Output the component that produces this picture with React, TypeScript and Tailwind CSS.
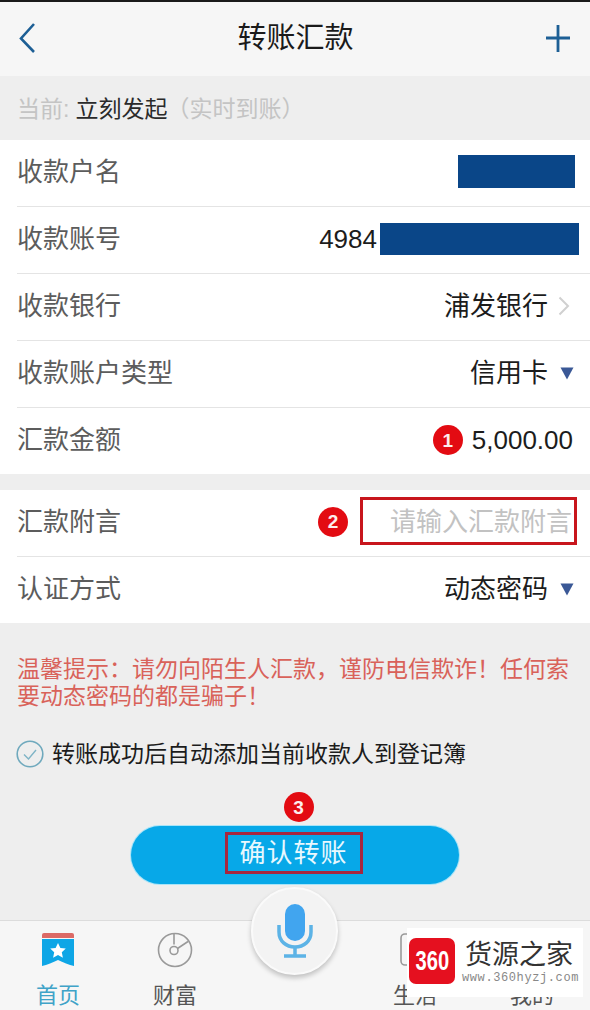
import type { ReactNode } from "react";

const CJK = "font-['Liberation_Sans','Noto_Sans_CJK_SC',sans-serif]";

function Badge({ n, className = "" }: { n: number; className?: string }) {
  return (
    <span
      className={`flex h-[30px] w-[30px] shrink-0 items-center justify-center rounded-full bg-[#e30b12] text-[19px] font-bold leading-none text-[#fdeeee] ${className}`}
    >
      {n}
    </span>
  );
}

function Caret() {
  return (
    <svg width="14" height="13" viewBox="0 0 14 13" className="ml-[12px] shrink-0">
      <path d="M0.5 0.5h13L7 12.5z" fill="#3a5896" />
    </svg>
  );
}

function Row({
  label,
  children,
  divider = true,
}: {
  label: string;
  children?: ReactNode;
  divider?: boolean;
}) {
  return (
    <div className="pl-[17px]">
      <div
        className={`flex items-center justify-between pb-[2px] pr-4 ${
          divider ? "h-[67px] border-b border-[#e4e4e4]" : "h-[66px]"
        }`}
      >
        <span className="text-[26px] leading-none text-[#5c5c5c]">{label}</span>
        <div className="flex items-center text-[26px] leading-none text-[#1c1c1c]">
          {children}
        </div>
      </div>
    </div>
  );
}

function App() {
  return (
    <div className={`relative h-[1010px] w-[590px] overflow-hidden bg-[#eeeeee] ${CJK}`}>
      <div className="h-[2px] bg-[#1a1a1a]" />

      <div className="flex h-[74px] items-center justify-between bg-[#f6f6f6] pb-[2px] pl-[18px] pr-[19px]">
        <svg width="26" height="32" viewBox="0 0 26 32" fill="none">
          <path d="M16 2L3 16.5 16 30" stroke="#1d5f95" strokeWidth="2.6" />
        </svg>
        <span className="ml-[2px] text-[29px] leading-none text-[#1a1a1a]">转账汇款</span>
        <svg width="26" height="30" viewBox="0 0 26 30" fill="none">
          <path d="M13 2v27M1 15h24" stroke="#1d5f95" strokeWidth="2.8" />
        </svg>
      </div>

      <div className="flex h-[64px] items-center bg-[#eeeeee] pl-[17px] pt-[2px] text-[23px] leading-none text-[#c4c4c4]">
        <span>当前:</span>
        <span className="ml-[6px] text-[#2a2a2a]">立刻发起</span>
        <span className="-ml-[1px] -mt-[3px] font-['Noto_Sans_CJK_SC',sans-serif]">{"\uFF08实时到账\uFF09"}</span>
      </div>

      <div className="bg-white">
        <Row label="收款户名">
          <div className="-mr-[1px] -mt-[2px] h-[33px] w-[117px] bg-[#0a4688]" />
        </Row>
        <Row label="收款账号">
          <span className="mr-[3px]">4984</span>
          <div className="-mr-[5px] h-[32px] w-[199px] bg-[#0a4688]" />
        </Row>
        <Row label="收款银行">
          <span>浦发银行</span>
          <svg width="12" height="20" viewBox="0 0 12 20" fill="none" className="ml-[10px] mr-[4px]">
            <path d="M1.5 1.5L10 10l-8.5 8.5" stroke="#d0d0d0" strokeWidth="2" />
          </svg>
        </Row>
        <Row label="收款账户类型">
          <span>信用卡</span>
          <Caret />
        </Row>
        <Row label="汇款金额" divider={false}>
          <Badge n={1} className="mr-[9px]" />
          <span className="mr-px text-[26px]">5,000.00</span>
        </Row>
      </div>

      <div className="mt-[16px] bg-white">
        <Row label="汇款附言">
          <Badge n={2} className="mr-[12px] mt-[-1px]" />
          <div className="-mr-[3px] -mt-[3px] flex h-[48px] w-[217px] items-center justify-end border-[3px] border-[#c8161d] pr-[2px] pt-[2px] text-[#c2c2c2]">
            请输入汇款附言
          </div>
        </Row>
        <Row label="认证方式" divider={false}>
          <span>动态密码</span>
          <Caret />
        </Row>
      </div>

      <p className="mt-[31px] w-[575px] pl-[17px] font-['Noto_Sans_CJK_SC',sans-serif] text-[23px] leading-[27px] text-[#d9625a]">
        {"温馨提示\uFF1A请勿向陌生人汇款\uFF0C谨防电信欺诈\uFF01任何索要动态密码的都是骗子\uFF01"}
      </p>

      <div className="mt-[32px] flex items-center pl-[16px]">
        <svg width="28" height="28" viewBox="0 0 28 28" fill="none">
          <circle cx="14" cy="14" r="12.8" stroke="#6fa9bd" strokeWidth="1.6" />
          <path d="M8 14.5l4.5 4.5L20 10" stroke="#7fb4c6" strokeWidth="1.4" />
        </svg>
        <span className="ml-[8px] text-[23px] leading-none text-[#1c1c1c]">
          转账成功后自动添加当前收款人到登记簿
        </span>
      </div>

      <div className="mt-[24px] flex justify-center pl-[7px]">
        <Badge n={3} />
      </div>

      <div className="mx-auto mt-[4px] flex h-[58px] w-[328px] items-center justify-center rounded-full bg-[#07a8e8] shadow-[0_0_0_1px_#a8e4f8]">
        <span className="mb-[5px] mr-[3px] flex h-[42px] w-[138px] items-center justify-center border-[3px] border-[#a6263f] pt-[2px] text-[26px] tracking-[1px] text-[#e8f8fe]">
          确认转账
        </span>
      </div>

      <div className="absolute inset-x-0 bottom-0 flex h-[90px] border-t border-[#dcdcdc] bg-[#f6f6f6]">
        <div className="ml-[36px] flex w-[44px] flex-col items-center pt-[11px]">
          <svg width="34" height="36" viewBox="0 0 34 36">
            <path d="M1 3a2 2 0 012-2h28a2 2 0 012 2v3H1z" fill="#dc6a66" />
            <path d="M1 7h32v27c-5-1-11-4-16-6-5 2-11 5-16 6z" fill="#0ea6e6" />
            <path
              d="M17 11l2.4 5 5.4.6-4 3.7 1.1 5.4L17 23l-4.9 2.7 1.1-5.4-4-3.7 5.4-.6z"
              fill="#ffffff"
            />
          </svg>
          <span className="mt-[17px] text-[22px] leading-none text-[#3fa3c8]">首页</span>
        </div>
        <div className="ml-[73px] flex w-[44px] flex-col items-center pt-[11px]">
          <svg width="36" height="36" viewBox="0 0 36 36" fill="none" stroke="#9a9a9a" strokeWidth="1.6">
            <circle cx="18" cy="18" r="16.5" />
            <circle cx="17" cy="18.5" r="4" />
            <path d="M17 2v10.5M20.5 16.5L31 9.5" />
          </svg>
          <span className="mt-[17px] text-[22px] leading-none text-[#555555]">财富</span>
        </div>
        <div className="ml-[196px] flex w-[44px] flex-col items-center pt-[11px]">
          <svg width="36" height="36" viewBox="0 0 36 36" fill="none" stroke="#9a9a9a" strokeWidth="1.6">
            <rect x="4" y="2" width="28" height="31" rx="4" />
          </svg>
          <span className="mt-[17px] text-[22px] leading-none text-[#555555]">生活</span>
        </div>
        <div className="ml-[73px] flex w-[44px] flex-col items-center pt-[11px]">
          <div className="h-[36px]" />
          <span className="mt-[17px] text-[22px] leading-none text-[#555555]">我的</span>
        </div>
      </div>

      {/* voice button sits over the tab bar */}
      <div className="absolute left-[251px] top-[887px] flex h-[88px] w-[87px] items-center justify-center rounded-full border-2 border-[#fafafa] bg-[#f3f3f3] shadow-[0_3px_5px_rgba(0,0,0,0.22)]">
        <svg width="36" height="54" viewBox="0 0 36 54" fill="none">
          <rect x="8" y="0" width="20" height="37" rx="10" fill="#41a5ef" />
          <path d="M2 21v7c0 9 7 15 16 15s16-6 16-15v-7" stroke="#5cb3e6" strokeWidth="3.5" />
          <path d="M18 43v8M7 52h22" stroke="#5cb3e6" strokeWidth="3.5" />
        </svg>
      </div>

      {/* site watermark */}
      <div className="absolute left-[407px] top-[928px] flex h-[69px] w-[176px] items-center bg-white">
        <div className="mb-[4px] ml-[2px] flex h-[46px] w-[46px] shrink-0 items-center justify-center rounded-[7px] bg-[#e5101f] text-white">
          <span className="inline-block scale-x-[0.72] text-[28px] font-bold leading-none">360</span>
        </div>
        <div className="ml-[10px] flex flex-col">
          <span className="text-[27px] leading-[30px] text-[#333333]">货源之家</span>
          <span className="-ml-[3px] whitespace-nowrap font-['Liberation_Mono',monospace] text-[12px] leading-[16px] tracking-[0.6px] text-[#888888]">
            www.360hyzj.com
          </span>
        </div>
      </div>
    </div>
  );
}

export default App;
